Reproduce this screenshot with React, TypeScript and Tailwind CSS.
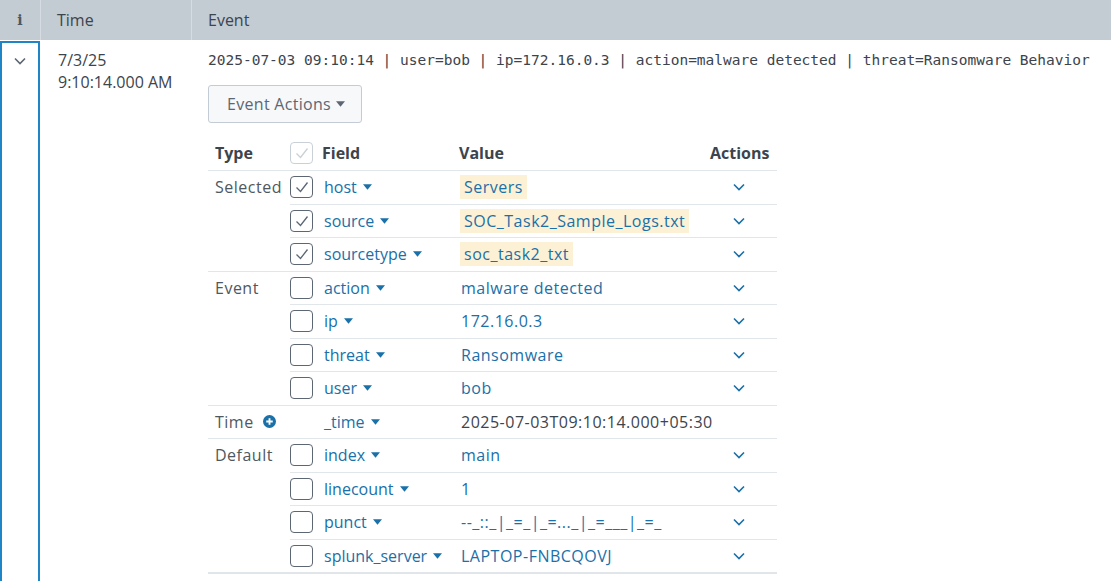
import React from 'react';

type Row = {
  field: string;
  value: string;
  checked?: boolean;
  noCheck?: boolean;
  highlight?: boolean;
  plain?: boolean;
  noAction?: boolean;
};

type Group = { type: string; plus?: boolean; rows: Row[] };

const groups: Group[] = [
  {
    type: 'Selected',
    rows: [
      { field: 'host', value: 'Servers', checked: true, highlight: true },
      { field: 'source', value: 'SOC_Task2_Sample_Logs.txt', checked: true, highlight: true },
      { field: 'sourcetype', value: 'soc_task2_txt', checked: true, highlight: true },
    ],
  },
  {
    type: 'Event',
    rows: [
      { field: 'action', value: 'malware detected' },
      { field: 'ip', value: '172.16.0.3' },
      { field: 'threat', value: 'Ransomware' },
      { field: 'user', value: 'bob' },
    ],
  },
  {
    type: 'Time',
    plus: true,
    rows: [{ field: '_time', value: '2025-07-03T09:10:14.000+05:30', noCheck: true, plain: true, noAction: true }],
  },
  {
    type: 'Default',
    rows: [
      { field: 'index', value: 'main' },
      { field: 'linecount', value: '1' },
      { field: 'punct', value: '--_::_|_=_|_=..._|_=___|_=_' },
      { field: 'splunk_server', value: 'LAPTOP-FNBCQOVJ' },
    ],
  },
];

const Chevron = ({ className }: { className?: string }) => (
  <svg className={className} viewBox="0 0 12 8" fill="none" stroke="currentColor" strokeWidth="1.6">
    <path d="M1 1.5l5 5 5-5" />
  </svg>
);

const Caret = () => (
  <svg className="w-[9px] h-[6px] ml-[6px] text-[#1a70a8]" viewBox="0 0 10 6" fill="currentColor">
    <path d="M0 0h10L5 6z" />
  </svg>
);

const Checkbox = ({ checked, light }: { checked?: boolean; light?: boolean }) => (
  <div
    className={`w-[23px] h-[22px] rounded-[4px] border flex items-center justify-center ${
      light ? 'border-[#c9d0d7] text-[#c9d0d7]' : 'border-[#5c6773] text-[#5c6773]'
    }`}
  >
    {checked && (
      <svg className="w-[14px] h-[12px]" viewBox="0 0 14 12" fill="none" stroke="currentColor" strokeWidth="1.3">
        <path d="M1.5 6.5l4 4 7-9" />
      </svg>
    )}
  </div>
);

const PlusCircle = () => (
  <svg className="w-[13px] h-[13px] ml-[9px]" viewBox="0 0 14 14">
    <circle cx="7" cy="7" r="7" fill="#1a70a8" />
    <path d="M7 3.5v7M3.5 7h7" stroke="#fff" strokeWidth="2" />
  </svg>
);

const FieldTable: React.FC = () => (
  <div className="mt-[12px] w-[569px]">
    <table className="w-[569px] table-fixed border-collapse">
      <colgroup>
        <col className="w-[82px]" />
        <col className="w-[28px]" />
        <col className="w-[137px]" />
        <col className="w-[245px]" />
        <col className="w-[77px]" />
      </colgroup>
      <thead>
        <tr className="text-[16px] font-bold text-[#3c444d]">
          <th className="text-left font-bold">
            <div className="h-[35px] flex items-center pl-[7px]">Type</div>
          </th>
          <th>
            <div className="h-[35px] flex items-center">
              <Checkbox checked light />
            </div>
          </th>
          <th className="text-left font-bold">
            <div className="h-[35px] flex items-center pl-[4px]">Field</div>
          </th>
          <th className="text-left font-bold">
            <div className="h-[35px] flex items-center pl-[4px]">Value</div>
          </th>
          <th className="text-left font-bold">
            <div className="h-[35px] flex items-center pl-[10px]">Actions</div>
          </th>
        </tr>
      </thead>
      <tbody>
        {groups.map((g) =>
          g.rows.map((r, i) => (
            <tr key={g.type + r.field} className="text-[16px]">
              {i === 0 && (
                <td rowSpan={g.rows.length} className="align-top border-t border-[#e1e6eb] p-0">
                  <div className="h-[32.5px] flex items-center pl-[7px] text-[#4f5861] tracking-[0.5px]">
                    {g.type}
                    {g.plus && <PlusCircle />}
                  </div>
                </td>
              )}
              <td className="border-t border-[#e1e6eb] p-0">
                <div className="h-[32.5px] flex items-center">
                  {!r.noCheck && <Checkbox checked={r.checked} />}
                </div>
              </td>
              <td className="border-t border-[#e1e6eb] p-0">
                <div className="h-[32.5px] flex items-center pl-[6px] text-[#1a70a8] whitespace-nowrap">
                  {r.field}
                  <Caret />
                </div>
              </td>
              <td className="border-t border-[#e1e6eb] p-0">
                <div className="h-[32.5px] flex items-center pl-[6px] whitespace-nowrap tracking-[0.5px]">
                  {r.highlight ? (
                    <span className="bg-[#fdf1d5] text-[#1a70a8] px-[4px] leading-[24px] -ml-[1px]">{r.value}</span>
                  ) : (
                    <span className={r.plain ? 'text-[#3c444d]' : 'text-[#1a70a8]'}>{r.value}</span>
                  )}
                </div>
              </td>
              <td className="border-t border-[#e1e6eb] p-0">
                <div className="h-[32.5px] flex items-center justify-center">
                  {!r.noAction && <Chevron className="w-[12px] h-[8px] text-[#1a70a8]" />}
                </div>
              </td>
            </tr>
          ))
        )}
      </tbody>
    </table>
    <div className="h-[2px] bg-[#e1e6eb]" />
  </div>
);

const App: React.FC = () => {
  return (
    <div className="w-[1111px] h-[581px] overflow-hidden bg-white font-['Open_Sans',sans-serif] text-[#3c444d]">
      <div className="h-[40px] bg-[#c3cbd3] flex text-[16px] text-[#3c444d]">
        <div className="w-[41px] flex items-center justify-center border-r border-[#d6dce2] font-['DejaVu_Serif',serif] font-bold text-[14px] text-[#4f5861]">
          i
        </div>
        <div className="w-[151px] flex items-center pl-[16px] border-r border-[#d6dce2]">Time</div>
        <div className="flex-1 flex items-center pl-[16px]">Event</div>
      </div>
      <div className="flex">
        <div className="w-[41px] pt-[1px]">
          <div className="w-[40px] h-[560px] border-2 border-b-0 border-[#1f85c6] flex justify-center pt-[14px]">
            <Chevron className="w-[12px] h-[8px] text-[#5c6773]" />
          </div>
        </div>
        <div className="w-[151px] pl-[17px] pt-[9px] text-[16px] leading-[22px] text-[#3c444d]">
          <div>7/3/25</div>
          <div>9:10:14.000 AM</div>
        </div>
        <div className="flex-1 pl-[16px] pt-[9px]">
          <div className="font-['DejaVu_Sans_Mono',monospace] text-[14.5px] leading-[22px] text-[#3c444d] whitespace-nowrap">
            2025-07-03 09:10:14 | user=bob | ip=172.16.0.3 | action=malware detected | threat=Ransomware Behavior
          </div>
          <button className="mt-[14px] h-[38px] w-[154px] flex items-center pl-[18px] bg-[#f7f8fa] border border-[#c3cbd4] rounded-[3px] text-[16px] text-[#5c6773] tracking-[0.3px]">
            Event Actions
            <svg className="w-[9px] h-[6px] ml-[5px]" viewBox="0 0 10 6" fill="currentColor">
              <path d="M0 0h10L5 6z" />
            </svg>
          </button>
          <FieldTable />
        </div>
      </div>
    </div>
  );
};

export default App;
